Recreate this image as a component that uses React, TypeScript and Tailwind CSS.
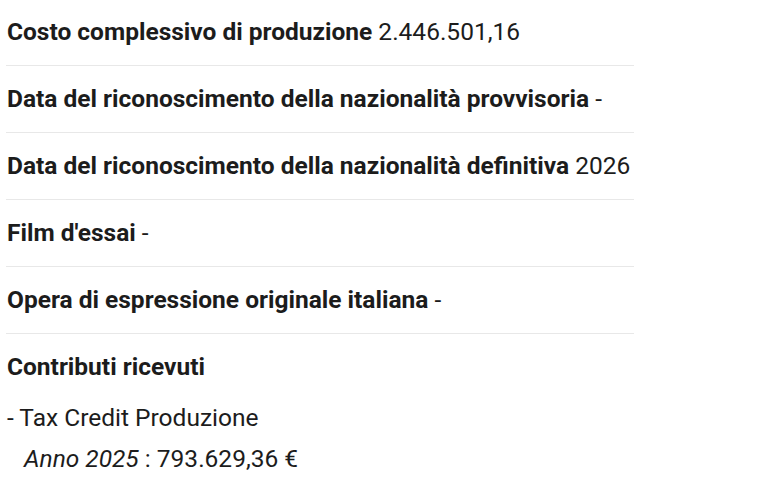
const rows: { label: string; value: string }[] = [
  { label: 'Costo complessivo di produzione', value: '2.446.501,16' },
  { label: 'Data del riconoscimento della nazionalità provvisoria', value: '-' },
  { label: 'Data del riconoscimento della nazionalità definitiva', value: '2026' },
  { label: "Film d'essai", value: '-' },
  { label: 'Opera di espressione originale italiana', value: '-' },
];

export default function App() {
  return (
    <div
      className="min-h-[497px] w-[767px] bg-white text-[#1c1c1c]"
      style={{ fontFamily: 'Roboto, "Noto Sans", sans-serif' }}
    >
      <div className="ml-[6px] w-[628px]">
        {rows.map((r) => (
          <div
            key={r.label}
            className="whitespace-nowrap border-b border-[#e8e8e8] pb-[20px] pl-px pt-[19px] text-[24.5px] leading-[27px] first:pt-[18px]"
          >
            <span className="font-bold">{r.label}</span> <span>{r.value}</span>
          </div>
        ))}
        <div className="pl-px pt-[19px] text-[24.5px] leading-[27px]">
          <div className="font-bold">Contributi ricevuti</div>
          <div className="mt-[24px]">- Tax Credit Produzione</div>
          <div className="mt-[14px] pl-[17px]">
            <span className="italic">Anno 2025</span> : 793.629,36 €
          </div>
        </div>
      </div>
    </div>
  );
}
